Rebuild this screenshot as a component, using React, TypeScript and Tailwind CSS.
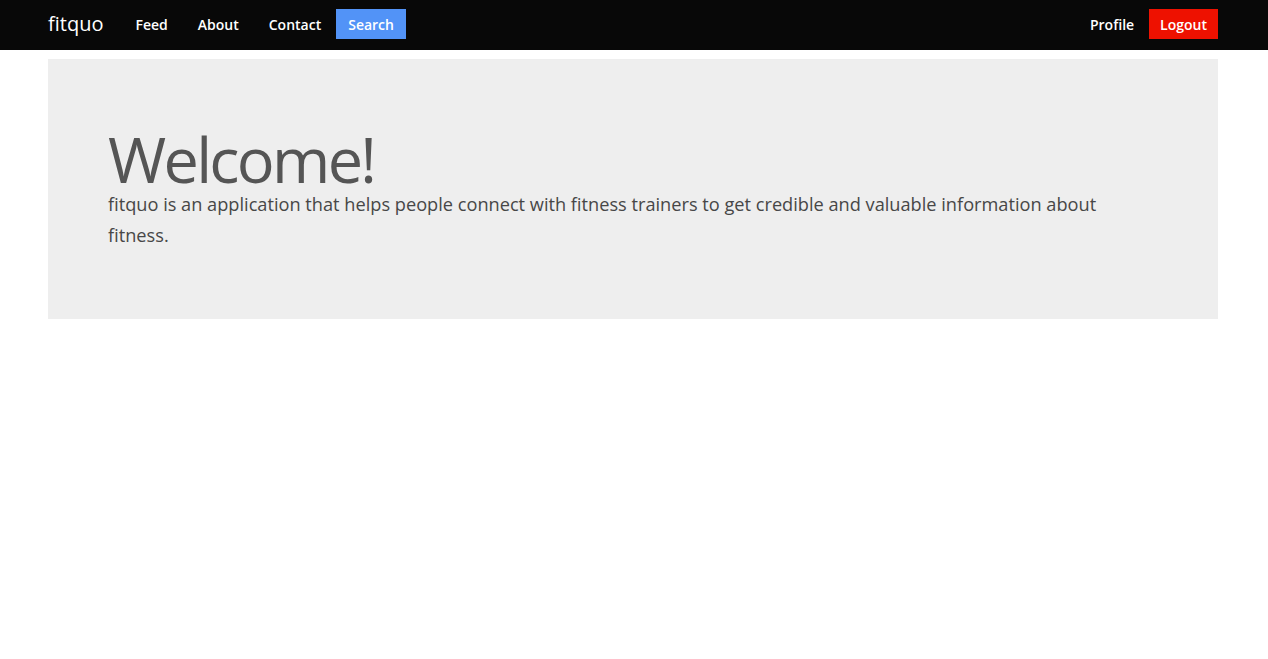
export default function App() {
  return (
    <div className="min-h-screen bg-white font-['Open_Sans',sans-serif]">
      <nav className="flex h-[50px] items-start justify-between bg-[#080808] px-[48px] pt-[9px]">
        <div className="flex h-[30px] items-center">
          <a className="text-[20px] leading-none text-white">fitquo</a>
          <div className="ml-[17px] flex items-center text-[14px] font-semibold text-white">
            <a className="px-[15px]">Feed</a>
            <a className="px-[15px]">About</a>
            <a className="px-[15px]">Contact</a>
            <a className="flex h-[30px] items-center bg-[#5293f7] px-[12px]">Search</a>
          </div>
        </div>
        <div className="mr-[2px] flex h-[30px] items-center text-[14px] font-semibold text-white">
          <a className="px-[15px]">Profile</a>
          <a className="flex h-[30px] items-center bg-[#ee1100] px-[11px]">Logout</a>
        </div>
      </nav>
      <main className="pl-[48px] pt-[9px]">
        <section className="h-[260px] w-[1170px] bg-[#eeeeee] px-[60px] pt-[72px]">
          <h1 className="text-[63px] leading-[0.9] tracking-[-2.7px] text-[#555555]">Welcome!</h1>
          <p className="mt-[1px] max-w-[1000px] text-[18.2px] leading-[31px] text-[#474747]">
            fitquo is an application that helps people connect with fitness trainers to get credible and valuable information about fitness.
          </p>
        </section>
      </main>
    </div>
  );
}
